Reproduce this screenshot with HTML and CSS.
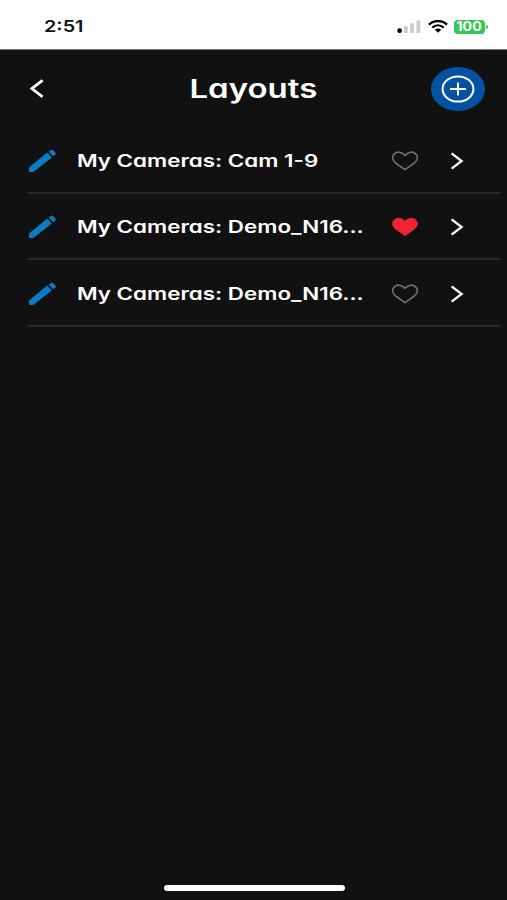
FILE: index.html
```
<!DOCTYPE html>
<html lang="en">
<head>
    <meta charset="UTF-8" />
    <meta name="viewport" content="width=device-width, initial-scale=1.0"/>
    <title>Layouts</title>
    <link rel="stylesheet" href="styles.css">
</head>
<body>
    <div class="status-bar">
        <span class="time">2:51</span>
        <div class="status-icons">
            <svg class="signal" width="24" height="14" viewBox="0 0 24 14">
                <rect x="0.3" y="8.2" width="4.6" height="4.8" rx="2" fill="#000"/>
                <rect x="6.8" y="6" width="4" height="7" rx="1" fill="#ccc"/>
                <rect x="13" y="3.2" width="4" height="9.8" rx="1" fill="#ccc"/>
                <rect x="19.4" y="0.6" width="4" height="12.4" rx="1" fill="#ccc"/>
            </svg>
            <svg class="wifi" width="20" height="13" viewBox="0 0 20 13">
                <path d="M1 4.6C6-.1 14-.1 19 4.6" fill="none" stroke="#000" stroke-width="2.5"/>
                <path d="M4.3 7.6C7.7 4.6 12.3 4.6 15.7 7.6" fill="none" stroke="#000" stroke-width="2.3"/>
                <path d="M6.8 9.8C8.7 8.2 11.3 8.2 13.2 9.8L10 12.7Z" fill="#000"/>
            </svg>
            <div class="battery"><span>100</span></div>
        </div>
    </div>

    <div class="header">
        <svg class="back" width="16" height="20" viewBox="0 0 16 20">
            <path d="M13.6 1.4L2.8 9.6L13.6 17.8" fill="none" stroke="#fff" stroke-width="2.7"/>
        </svg>
        <h1 class="title">Layouts</h1>
        <button class="add">
            <svg width="34" height="28" viewBox="0 0 34 28">
                <ellipse cx="17" cy="14" rx="15.4" ry="12.6" fill="none" stroke="#fff" stroke-width="2"/>
                <path d="M9 14H25M17 7.5V20.5" stroke="#fff" stroke-width="1.9"/>
            </svg>
        </button>
    </div>

    <ul class="layout-list">
        <li class="row">
            <svg class="pencil" width="28" height="24" viewBox="0 0 28 24">
                <path d="M1 18.6L19.2 3.6L23.8 8.4L6 22.6Q5.4 23.1 4.4 23.1H1.8Q1 23.1 1 22.3Z"/>
                <path d="M20.6 2.6L22.4 1.2Q24 .3 25.4 1.4L27.4 3.4Q28.3 4.8 27.1 5.8L25.2 7.3Z"/>
            </svg>
            <span class="name"><span class="wide">My Cameras: Cam 1-9</span></span>
            <svg class="heart" width="28" height="20" viewBox="0 0 28 20">
                <path d="M14 18.6L4.6 12C1 9 .7 4.7 3.8 2.5C7 .4 11 1.2 14 4.4C17 1.2 21 .4 24.2 2.5C27.3 4.7 27 9 23.4 12Z"/>
            </svg>
            <svg class="next" width="14" height="18" viewBox="0 0 14 18">
                <path d="M1.6 1.4L11.6 9L1.6 16.6"/>
            </svg>
        </li>
        <li class="row">
            <svg class="pencil" width="28" height="24" viewBox="0 0 28 24">
                <path d="M1 18.6L19.2 3.6L23.8 8.4L6 22.6Q5.4 23.1 4.4 23.1H1.8Q1 23.1 1 22.3Z"/>
                <path d="M20.6 2.6L22.4 1.2Q24 .3 25.4 1.4L27.4 3.4Q28.3 4.8 27.1 5.8L25.2 7.3Z"/>
            </svg>
            <span class="name"><span class="wide">My Cameras: Demo_N16...</span></span>
            <svg class="heart favorite" width="28" height="20" viewBox="0 0 28 20">
                <path d="M14 18.6L4.6 12C1 9 .7 4.7 3.8 2.5C7 .4 11 1.2 14 4.4C17 1.2 21 .4 24.2 2.5C27.3 4.7 27 9 23.4 12Z"/>
            </svg>
            <svg class="next" width="14" height="18" viewBox="0 0 14 18">
                <path d="M1.6 1.4L11.6 9L1.6 16.6"/>
            </svg>
        </li>
        <li class="row">
            <svg class="pencil" width="28" height="24" viewBox="0 0 28 24">
                <path d="M1 18.6L19.2 3.6L23.8 8.4L6 22.6Q5.4 23.1 4.4 23.1H1.8Q1 23.1 1 22.3Z"/>
                <path d="M20.6 2.6L22.4 1.2Q24 .3 25.4 1.4L27.4 3.4Q28.3 4.8 27.1 5.8L25.2 7.3Z"/>
            </svg>
            <span class="name"><span class="wide">My Cameras: Demo_N16...</span></span>
            <svg class="heart" width="28" height="20" viewBox="0 0 28 20">
                <path d="M14 18.6L4.6 12C1 9 .7 4.7 3.8 2.5C7 .4 11 1.2 14 4.4C17 1.2 21 .4 24.2 2.5C27.3 4.7 27 9 23.4 12Z"/>
            </svg>
            <svg class="next" width="14" height="18" viewBox="0 0 14 18">
                <path d="M1.6 1.4L11.6 9L1.6 16.6"/>
            </svg>
        </li>
    </ul>

    <div class="home-indicator"></div>
</body>
</html>
```
FILE: styles.css
```
* {
    box-sizing: border-box;
}

body {
    display: flex;
    flex-direction: column;
    height: 900px;
    margin: 0;
    background: #111;
    color: #fff;
    font-family: Inter, "Liberation Sans", sans-serif;
    font-feature-settings: "cv11";
    overflow: hidden;
}

.status-bar {
    display: flex;
    justify-content: space-between;
    height: 50px;
    padding: 16px 22px 0 44px;
    background: #fff;
    border-bottom: 1px solid #777;
    color: #111;
}

.time {
    font-size: 16.5px;
    font-weight: 600;
    line-height: 21px;
    transform: scaleX(1.2);
    transform-origin: left;
}

.status-icons {
    display: flex;
    align-items: flex-start;
    padding-top: 4px;
}

.wifi {
    margin-left: 7px;
}

.battery {
    position: relative;
    width: 31px;
    height: 14px;
    margin-left: 6px;
    background: #34c759;
    border-radius: 4px;
    font-size: 12.5px;
    font-weight: 700;
    line-height: 14px;
    text-align: center;
    color: #fff;
}

.battery span {
    display: inline-block;
    transform: scaleX(1.14);
}

.battery::after {
    content: "";
    position: absolute;
    top: 5px;
    right: -3px;
    width: 2px;
    height: 4px;
    border-radius: 0 2px 2px 0;
    background: #34c759;
}

.header {
    display: flex;
    align-items: center;
    justify-content: space-between;
    height: 77px;
    padding: 0 22px 0 29px;
}

.title {
    margin: 0 0 0 31px;
    font-size: 26px;
    font-weight: 600;
    line-height: 32px;
    transform: scaleX(1.27);
}

.add {
    display: flex;
    align-items: center;
    justify-content: center;
    width: 54px;
    height: 44px;
    padding: 0;
    border: none;
    border-radius: 50%;
    background: #0552a2;
}

.layout-list {
    margin: 0;
    padding: 0 7px 0 28px;
    list-style: none;
}

.row {
    display: flex;
    align-items: center;
    height: 66.5px;
    padding: 3px 36px 0 0;
    border-bottom: 2px solid #292929;
}

.pencil {
    fill: #0a7bc4;
}

.name {
    flex: 1;
    margin-left: 21px;
    font-size: 17px;
    font-weight: 600;
    line-height: 24px;
    white-space: nowrap;
}

.wide {
    display: inline-block;
    transform: scaleX(1.316);
    transform-origin: left;
}

.heart {
    margin-right: 31px;
    fill: none;
    stroke: #707070;
    stroke-width: 1.6;
}

.heart.favorite {
    fill: #f02432;
    stroke: #f02432;
    stroke-width: 1;
}

.next {
    fill: none;
    stroke: #fff;
    stroke-width: 2.3;
}

.home-indicator {
    width: 181px;
    height: 6px;
    margin: auto auto 9px 164px;
    border-radius: 3px;
    background: #fff;
}
```
